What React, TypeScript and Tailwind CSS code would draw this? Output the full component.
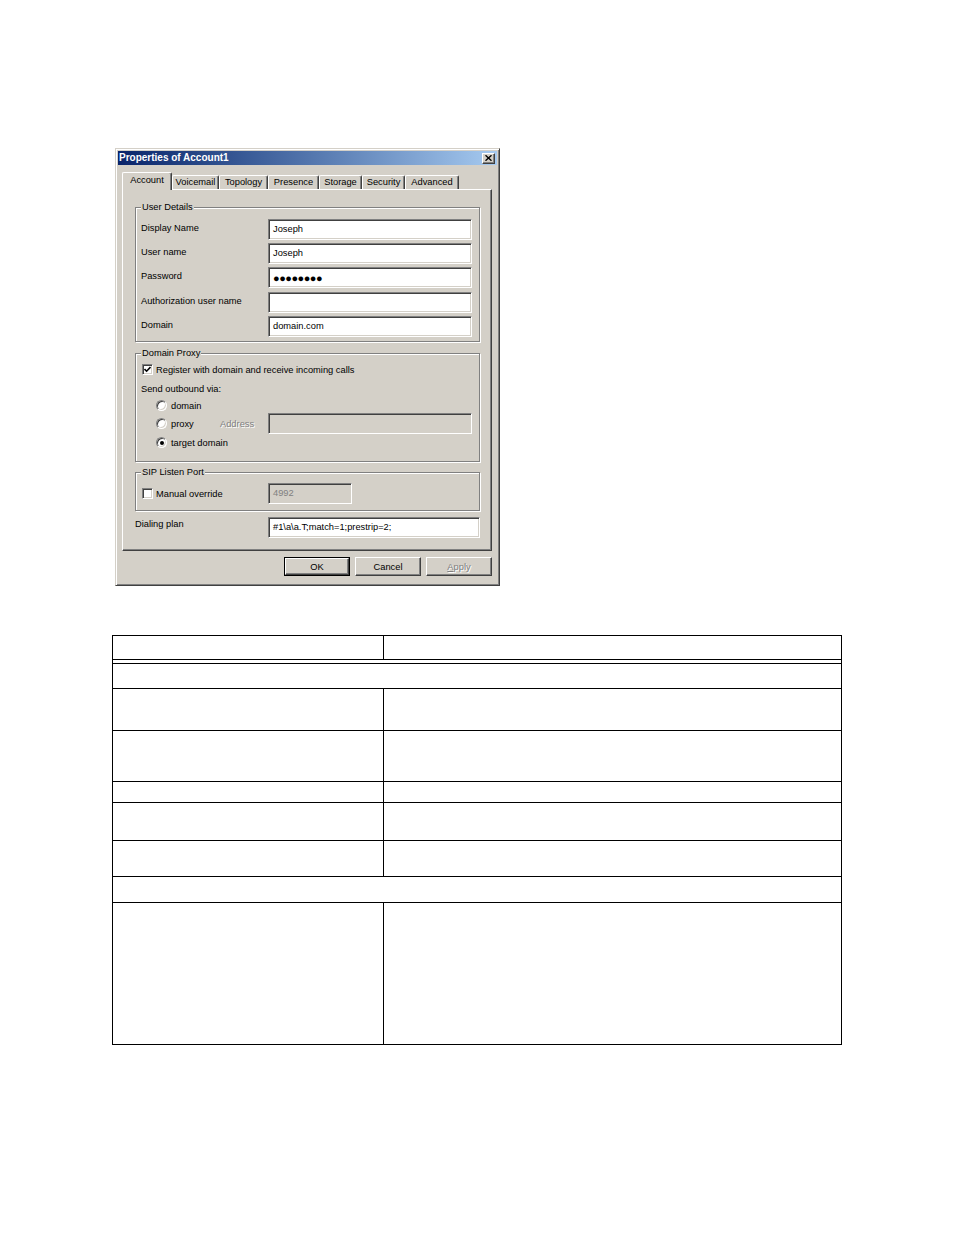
import React from "react";

const sunken =
  "border border-t-[#808080] border-l-[#808080] border-b-white border-r-white shadow-[inset_1px_1px_0_#404040,inset_-1px_-1px_0_#d4d0c8]";
const raised =
  "border border-t-white border-l-white border-b-[#404040] border-r-[#404040] shadow-[inset_-1px_-1px_0_#808080]";

function Group({ title, className, children }: { title: string; className?: string; children?: React.ReactNode }) {
  return (
    <div className={"w-[345px] border border-[#808080] shadow-[inset_1px_1px_0_#fff,1px_1px_0_#fff] " + (className ?? "")}>
      <div className="-mt-[7px] ml-[5px] w-fit bg-[#d4d0c8] px-[1px] h-[12px] leading-[12px]">{title}</div>
      {children}
    </div>
  );
}

function Field({ value, className, disabled, children }: { value?: string; className?: string; disabled?: boolean; children?: React.ReactNode }) {
  return (
    <div
      className={
        sunken +
        " h-[21px] flex items-center pl-[4px] whitespace-nowrap overflow-hidden " +
        (disabled ? "bg-[#d4d0c8] text-[#808080] " : "bg-white ") +
        (className ?? "")
      }
    >
      {children ?? value}
    </div>
  );
}

function Checkbox({ checked }: { checked?: boolean }) {
  return (
    <div className={sunken + " w-[11px] h-[11px] bg-white flex items-center justify-center shrink-0"}>
      {checked && (
        <svg width="7" height="7" viewBox="0 0 7 7">
          <path d="M0.5 3 L2.6 5.2 L6.5 1" fill="none" stroke="#000" strokeWidth="1.6" />
        </svg>
      )}
    </div>
  );
}

function Radio({ checked }: { checked?: boolean }) {
  return (
    <div className="w-[11px] h-[11px] rounded-full bg-white border border-t-[#808080] border-l-[#808080] border-b-white border-r-white shadow-[inset_1px_1px_0_#404040,inset_-1px_-1px_0_#d4d0c8] flex items-center justify-center shrink-0">
      {checked && <div className="w-[4px] h-[4px] rounded-full bg-black" />}
    </div>
  );
}

function Tab({ label, w, active }: { label: string; w: string; active?: boolean }) {
  if (active) {
    return (
      <div className={"relative z-10 -mb-[1px] h-[18px] bg-[#d4d0c8] border-t border-l border-r border-t-white border-l-white border-r-[#404040] shadow-[inset_-1px_0_0_#808080] rounded-t-[2px] flex justify-center pt-[1px] leading-[12px] " + w}>
        {label}
      </div>
    );
  }
  return (
    <div className={"h-[14px] border-t border-l border-r border-t-white border-l-white border-r-[#404040] shadow-[inset_-1px_0_0_#808080] rounded-t-[2px] flex justify-center leading-[12px] " + w}>
      {label}
    </div>
  );
}

function Row({ label, children, className }: { label: string; children: React.ReactNode; className?: string }) {
  return (
    <div className={"flex items-center justify-between h-[21px] " + (className ?? "")}>
      <span className="leading-[12px] pb-[4px]">{label}</span>
      {children}
    </div>
  );
}

function TRow({ h, last }: { h: string; last?: boolean }) {
  return (
    <div className={"flex " + h + (last ? "" : " border-b border-black")}>
      <div className="w-[271px] border-r border-black" />
      <div className="flex-1" />
    </div>
  );
}

export default function App() {
  return (
    <div className="w-[954px] h-[1235px] bg-white pt-[148px]">
      {/* Dialog */}
      <div className="ml-[115px] w-[385px] h-[438px] bg-[#d4d0c8] border border-t-[#d4d0c8] border-l-[#d4d0c8] border-b-[#404040] border-r-[#404040] shadow-[inset_1px_1px_0_#fff,inset_-1px_-1px_0_#808080] p-[2px] flex flex-col text-[9.3px] text-black [font-family:'Liberation_Sans',Arial,sans-serif]">
        {/* Title bar */}
        <div className="h-[14px] flex items-center justify-between bg-linear-to-r from-[#0a246a] to-[#a6caf0]">
          <span className="pl-[1px] text-white font-bold text-[10px] leading-[14px]">Properties of Account1</span>
          <div className={raised + " mr-[2px] w-[13px] h-[11px] bg-[#d4d0c8] flex items-center justify-center"}>
            <svg width="7" height="6" viewBox="0 0 7 6">
              <path d="M0.5 0.3 L6.5 5.7 M6.5 0.3 L0.5 5.7" stroke="#000" strokeWidth="1.4" />
            </svg>
          </div>
        </div>

        {/* Tabs */}
        <div className="mt-[7px] ml-[4px] h-[17px] flex items-end">
          <Tab label="Account" w="w-[50px]" active />
          <Tab label="Voicemail" w="w-[47px]" />
          <Tab label="Topology" w="w-[49px]" />
          <Tab label="Presence" w="w-[51px]" />
          <Tab label="Storage" w="w-[43px]" />
          <Tab label="Security" w="w-[43px]" />
          <Tab label="Advanced" w="w-[54px]" />
        </div>

        {/* Panel */}
        <div className="ml-[4px] w-[370px] h-[362px] border border-t-white border-l-white border-b-[#404040] border-r-[#404040] shadow-[inset_-1px_-1px_0_#808080] pt-[11px] pl-[12px]">
          <Group title="User Details" className="mt-[6px]">
            <div className="pl-[5px] pr-[7px] pb-[4px] pt-[6px]">
              <Row label="Display Name">
                <Field value="Joseph" className="w-[204px]" />
              </Row>
              <Row label="User name" className="mt-[3px]">
                <Field value="Joseph" className="w-[204px]" />
              </Row>
              <Row label="Password" className="mt-[3px]">
                <Field className="w-[204px]">
                  <span className="text-[11px] font-bold tracking-[-0.5px] leading-[12px]">●●●●●●●●</span>
                </Field>
              </Row>
              <Row label="Authorization user name" className="mt-[4px]">
                <Field value="" className="w-[204px]" />
              </Row>
              <Row label="Domain" className="mt-[3px]">
                <Field value="domain.com" className="w-[204px]" />
              </Row>
            </div>
          </Group>

          <Group title="Domain Proxy" className="mt-[11px]">
            <div className="pl-[5px] pr-[7px] pb-[12px]">
              <div className="mt-[4px] h-[13px] flex items-center gap-[3px] pl-[1px]">
                <Checkbox checked />
                <span className="leading-[12px]">Register with domain and receive incoming calls</span>
              </div>
              <div className="mt-[7px] h-[12px] leading-[12px]">Send outbound via:</div>
              <div className="mt-[4px] h-[13px] flex items-center gap-[4px] pl-[15px]">
                <Radio />
                <span className="leading-[12px]">domain</span>
              </div>
              <div className="mt-[1px] h-[21px] flex items-center pl-[15px]">
                <div className="w-[64px] flex items-center gap-[4px]">
                  <Radio />
                  <span className="leading-[12px]">proxy</span>
                </div>
                <span className="flex-1 leading-[12px] text-[#808080] [text-shadow:1px_1px_0_#fff]">Address</span>
                <Field disabled className="w-[204px]" />
              </div>
              <div className="mt-[2px] h-[13px] flex items-center gap-[4px] pl-[15px]">
                <Radio checked />
                <span className="leading-[12px]">target domain</span>
              </div>
            </div>
          </Group>

          <Group title="SIP Listen Port" className="mt-[10px]">
            <div className="pl-[5px] pr-[7px] pb-[6px]">
              <div className="mt-[5px] h-[21px] flex items-center">
                <div className="w-[127px] flex items-center gap-[3px] pl-[1px]">
                  <Checkbox />
                  <span className="leading-[12px]">Manual override</span>
                </div>
                <Field disabled value="4992" className="w-[84px]" />
              </div>
            </div>
          </Group>

          <div className="mt-[6px] w-[345px] h-[21px] flex items-start">
            <span className="mt-[1px] leading-[12px]">Dialing plan</span>
            <Field value={"#1\\a\\a.T;match=1;prestrip=2;"} className="ml-auto w-[212px]" />
          </div>
        </div>

        {/* Buttons */}
        <div className="mt-[6px] flex justify-end gap-[5px] pr-[5px]">
          <div className="w-[66px] h-[19px] border border-black">
            <div className={raised + " w-full h-full flex items-center justify-center leading-[12px]"}>OK</div>
          </div>
          <div className={raised + " w-[66px] h-[19px] flex items-center justify-center leading-[12px]"}>Cancel</div>
          <div className={raised + " w-[66px] h-[19px] flex items-center justify-center leading-[12px] text-[#808080] [text-shadow:1px_1px_0_#fff]"}>
            <span><span className="underline">A</span>pply</span>
          </div>
        </div>
      </div>

      {/* Table */}
      <div className="ml-[112px] mt-[49px] w-[730px] border border-black flex flex-col">
        <TRow h="h-[24px]" />
        <div className="h-[4px] border-b border-black" />
        <div className="h-[25px] border-b border-black" />
        <TRow h="h-[42px]" />
        <TRow h="h-[51px]" />
        <TRow h="h-[21px]" />
        <TRow h="h-[38px]" />
        <TRow h="h-[36px]" />
        <div className="h-[26px] border-b border-black" />
        <TRow h="h-[141px]" last />
      </div>
    </div>
  );
}
